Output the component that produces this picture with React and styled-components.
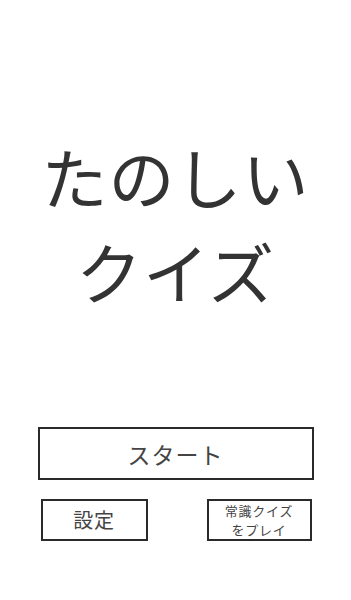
import styled, { createGlobalStyle } from "styled-components"

const GlobalStyle = createGlobalStyle`
  html, body {
    margin: 0;
    padding: 0;
    background: #fff;
  }
  body {
    font-family: "Noto Sans CJK JP", "Noto Sans", sans-serif;
    color: #333;
  }
`

const Screen = styled.div`
  width: 351px;
  height: 600px;
  display: flex;
  flex-direction: column;
  align-items: center;
  box-sizing: border-box;
  padding-top: 128px;
`

const Title = styled.h1`
  margin: 0;
  font-weight: 400;
  font-size: 66px;
  line-height: 95px;
  letter-spacing: 1px;
  text-align: center;
  color: #333;
`

const Menu = styled.div`
  margin-top: 109px;
  width: 276px;
  display: flex;
  flex-direction: column;
  gap: 19px;
`

const Button = styled.button`
  box-sizing: border-box;
  background: #fff;
  border: 2px solid #2a2a2a;
  color: #444;
  font-family: inherit;
  font-weight: 400;
  padding: 0;
  cursor: pointer;
`

const StartButton = styled(Button)`
  width: 100%;
  height: 53px;
  font-size: 23px;
  letter-spacing: 1px;
`

const Row = styled.div`
  display: flex;
  justify-content: space-between;
  padding: 0 2px 0 3px;
`

const SmallButton = styled(Button)`
  width: ${(p) => p.$w}px;
  height: 42px;
  font-size: ${(p) => p.$size}px;
  display: flex;
  flex-direction: column;
  align-items: center;
  justify-content: center;
`

const Line = styled.span`
  display: block;
  line-height: ${(p) => p.$lh}px;
  letter-spacing: 0.8px;
`

export default function App() {
  return (
    <>
      <GlobalStyle />
      <Screen>
        <Title>
          たのしい
          <br />
          クイズ
        </Title>
        <Menu>
          <StartButton>スタート</StartButton>
          <Row>
            <SmallButton $w={107} $size={20}>
              <Line $lh={24}>設定</Line>
            </SmallButton>
            <SmallButton $w={105} $size={13}>
              <Line $lh={19}>常識クイズ</Line>
              <Line $lh={19}>をプレイ</Line>
            </SmallButton>
          </Row>
        </Menu>
      </Screen>
    </>
  )
}
